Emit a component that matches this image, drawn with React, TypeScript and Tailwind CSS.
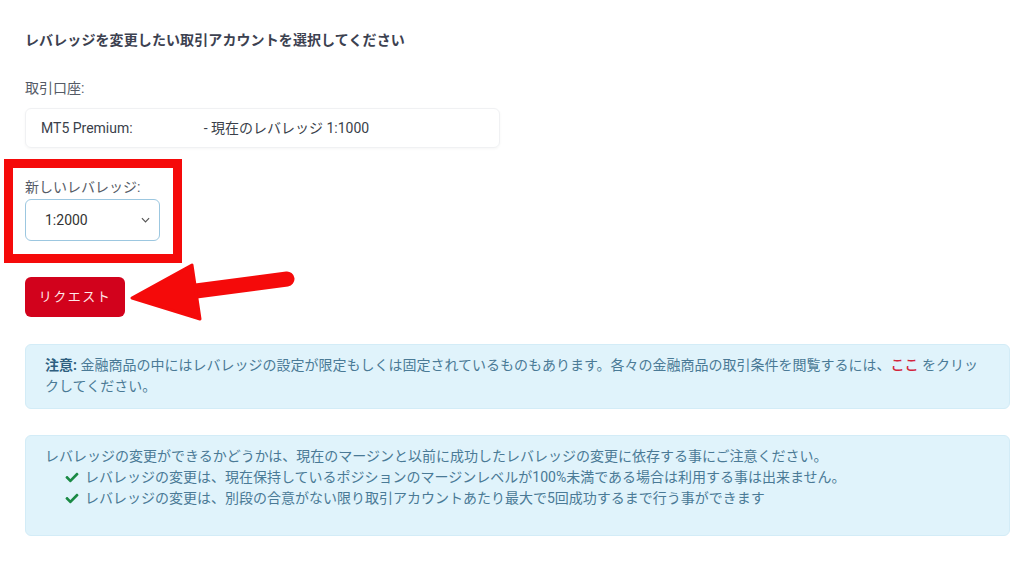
import React from "react";
import { FaCheck } from "react-icons/fa";

const font = { fontFamily: 'Roboto, "Noto Sans CJK JP", sans-serif' };

const Check = () => <FaCheck className="w-[14px] h-[13px] shrink-0 mr-[6px] text-[#1b8a45]" />;

const App = () => {
  return (
    <div className="relative w-[1024px] h-[576px] bg-white overflow-hidden" style={font}>
      <div className="flex flex-col px-[25px] pt-[30px]">
        <h2 className="text-[14px] leading-[20px] font-bold text-[#3c4150] tracking-[0.1px]">
          レバレッジを変更したい取引アカウントを選択してください
        </h2>

        <div className="mt-[28px] text-[14px] leading-[20px] text-[#555b66]">取引口座:</div>

        <div className="mt-[10px] w-[475px] h-[40px] flex items-center pl-[15px] rounded-md border border-[#f0f1f3] shadow-[0_1px_3px_rgba(0,0,0,0.04)] text-[14px] text-[#3a3f4a]">
          <span>MT5 Premium:</span>
          <span className="ml-[71px]">- 現在のレバレッジ 1:1000</span>
        </div>

        <div className="mt-[11px] -ml-[21px] w-[178px] h-[104px] border-[9px] border-[#f50a0a] pl-[12px] pt-[9px]">
          <div className="text-[14px] leading-[20px] text-[#555b66]">新しいレバレッジ:</div>
          <div className="mt-[2px] w-[135px] h-[42px] rounded-md border border-[#9cc7e0] flex items-center justify-between pl-[19px] pr-[9px] text-[14px] text-[#333]">
            <span>1:2000</span>
            <svg viewBox="0 0 10 6" className="w-[9px] h-[6px]">
              <path d="M1 1 L5 5 L9 1" fill="none" stroke="#555" strokeWidth="1.3" />
            </svg>
          </div>
        </div>

        <button className="mt-[14px] w-[100px] h-[40px] rounded-md bg-[#d2021c] text-[#ffe9ea] text-[13px] tracking-[1.5px]">
          リクエスト
        </button>

        <div className="mt-[27px] w-[985px] rounded-md bg-[#e0f3fb] border border-[#d3ecf7] pl-[19px] pt-[10px] pb-[11px] text-[14px] leading-[21px] text-[#4a7a96]">
          <span className="font-bold text-[#2f5f7f]">注意:</span> 金融商品の中にはレバレッジの設定が限定もしくは固定されているものもあります。各々の金融商品の取引条件を閲覧するには、<span className="text-[#d2243c] font-medium">ここ</span> をクリッ
          <br />
          クしてください。
        </div>

        <div className="mt-[26px] w-[985px] rounded-md bg-[#e0f3fb] border border-[#d3ecf7] pl-[19px] pt-[10px] pb-[26px] text-[14px] leading-[21px] text-[#4a7a96]">
          <div>レバレッジの変更ができるかどうかは、現在のマージンと以前に成功したレバレッジの変更に依存する事にご注意ください。</div>
          <div className="flex items-center pl-[20px]">
            <Check />
            <span>レバレッジの変更は、現在保持しているポジションのマージンレベルが100%未満である場合は利用する事は出来ません。</span>
          </div>
          <div className="flex items-center pl-[20px]">
            <Check />
            <span>レバレッジの変更は、別段の合意がない限り取引アカウントあたり最大で5回成功するまで行う事ができます</span>
          </div>
        </div>
      </div>

      <svg className="absolute left-0 top-0 pointer-events-none" width="1024" height="576" viewBox="0 0 1024 576">
        <line x1="196" y1="291" x2="287" y2="279" stroke="#f50a0a" strokeWidth="15" strokeLinecap="round" />
        <polygon points="132,298 192,265 200,319" fill="#f50a0a" stroke="#f50a0a" strokeWidth="3" strokeLinejoin="round" />
      </svg>
    </div>
  );
};

export default App;
